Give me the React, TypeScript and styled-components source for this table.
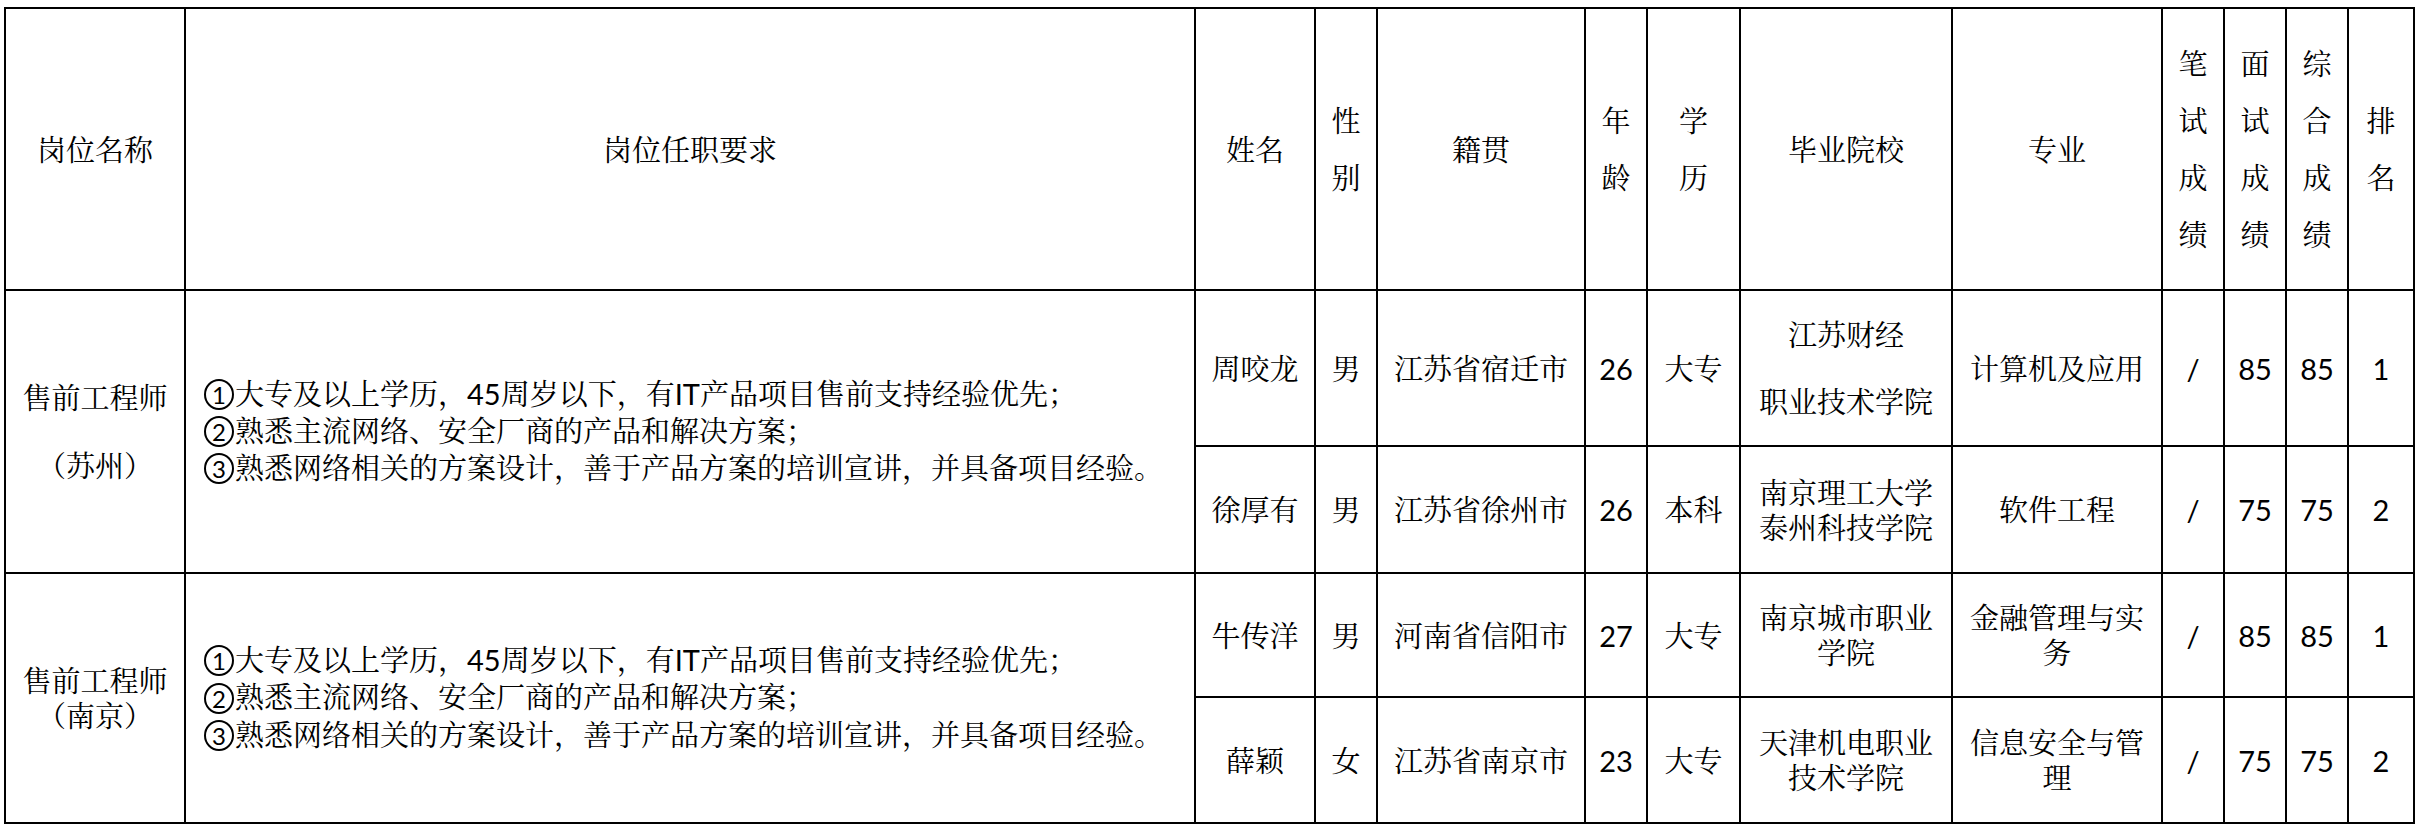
import React from "react";
import styled, { createGlobalStyle } from "styled-components";

const GlobalStyle = createGlobalStyle`
  body {
    margin: 0;
    background: #ffffff;
  }
`;

const Page = styled.div`
  padding: 7px 0 0 4px;
  font-family: "Lato", "Noto Serif CJK SC", "Noto Sans CJK SC", sans-serif;
  color: #000;
`;

const Sheet = styled.table`
  border-collapse: collapse;
  table-layout: fixed;
  width: 2409px;
  font-size: 29px;
`;

const Row = styled.tr<{ $h: number }>`
  height: ${(p) => p.$h}px;
`;

const Cell = styled.td<{ $left?: boolean; $pad?: number }>`
  border: 2px solid #000;
  padding: 0 ${(p) => p.$pad ?? 12}px;
  text-align: ${(p) => (p.$left ? "left" : "center")};
  vertical-align: middle;
  line-height: 35px;
  word-break: break-all;
`;

const Lines = styled.div<{ $lh: number }>`
  line-height: ${(p) => p.$lh}px;
`;

const Line = styled.div`
  white-space: nowrap;
`;

const Circled = styled.span`
  display: inline-block;
  position: relative;
  top: -3px;
  box-sizing: border-box;
  width: 30px;
  height: 31px;
  margin-right: 1px;
  border: 2px solid #000;
  border-radius: 50%;
  font-size: 24px;
  line-height: 27px;
  text-align: center;
  vertical-align: middle;
`;

const cols = [180, 1010, 120, 62, 208, 62, 93, 212, 210, 62, 62, 62, 66];

const Stack = ({ lines, lh }: { lines: string[]; lh: number }) => (
  <Lines $lh={lh}>
    {lines.map((l, i) => (
      <Line key={i}>{l}</Line>
    ))}
  </Lines>
);

const requirements = [
  "大专及以上学历，45周岁以下，有IT产品项目售前支持经验优先；",
  "熟悉主流网络、安全厂商的产品和解决方案；",
  "熟悉网络相关的方案设计，善于产品方案的培训宣讲，并具备项目经验。",
];

const Requirements = () => (
  <Lines $lh={35}>
    {requirements.map((r, i) => (
      <Line key={i}>
        <Circled>{i + 1}</Circled>
        {r}
      </Line>
    ))}
  </Lines>
);

type Person = {
  name: string;
  sex: string;
  origin: string;
  age: string;
  edu: string;
  school: string | string[];
  major: string;
  written: string;
  interview: string;
  total: string;
  rank: string;
  h: number;
};

const groups: { post: string[]; postLh: number; people: Person[] }[] = [
  {
    post: ["售前工程师", "（苏州）"],
    postLh: 68,
    people: [
      {
        name: "周咬龙",
        sex: "男",
        origin: "江苏省宿迁市",
        age: "26",
        edu: "大专",
        school: ["江苏财经", "职业技术学院"],
        major: "计算机及应用",
        written: "/",
        interview: "85",
        total: "85",
        rank: "1",
        h: 156,
      },
      {
        name: "徐厚有",
        sex: "男",
        origin: "江苏省徐州市",
        age: "26",
        edu: "本科",
        school: "南京理工大学泰州科技学院",
        major: "软件工程",
        written: "/",
        interview: "75",
        total: "75",
        rank: "2",
        h: 127,
      },
    ],
  },
  {
    post: ["售前工程师", "（南京）"],
    postLh: 35,
    people: [
      {
        name: "牛传洋",
        sex: "男",
        origin: "河南省信阳市",
        age: "27",
        edu: "大专",
        school: "南京城市职业学院",
        major: "金融管理与实务",
        written: "/",
        interview: "85",
        total: "85",
        rank: "1",
        h: 124,
      },
      {
        name: "薛颖",
        sex: "女",
        origin: "江苏省南京市",
        age: "23",
        edu: "大专",
        school: "天津机电职业技术学院",
        major: "信息安全与管理",
        written: "/",
        interview: "75",
        total: "75",
        rank: "2",
        h: 126,
      },
    ],
  },
];

const vertical = (s: string) => <Stack lines={s.split("")} lh={57} />;

const App = () => {
  return (
    <Page>
      <GlobalStyle />
      <Sheet>
        <colgroup>
          {cols.map((w, i) => (
            <col key={i} style={{ width: w }} />
          ))}
        </colgroup>
        <tbody>
          <Row $h={282}>
            <Cell>岗位名称</Cell>
            <Cell>岗位任职要求</Cell>
            <Cell>姓名</Cell>
            <Cell $pad={4}>{vertical("性别")}</Cell>
            <Cell>籍贯</Cell>
            <Cell $pad={4}>{vertical("年龄")}</Cell>
            <Cell>{vertical("学历")}</Cell>
            <Cell>毕业院校</Cell>
            <Cell>专业</Cell>
            <Cell $pad={4}>{vertical("笔试成绩")}</Cell>
            <Cell $pad={4}>{vertical("面试成绩")}</Cell>
            <Cell $pad={4}>{vertical("综合成绩")}</Cell>
            <Cell $pad={4}>{vertical("排名")}</Cell>
          </Row>
          {groups.map((g, gi) =>
            g.people.map((p, pi) => (
              <Row $h={p.h} key={`${gi}-${pi}`}>
                {pi === 0 && (
                  <>
                    <Cell rowSpan={g.people.length}>
                      <Stack lines={g.post} lh={g.postLh} />
                    </Cell>
                    <Cell rowSpan={g.people.length} $left $pad={18}>
                      <Requirements />
                    </Cell>
                  </>
                )}
                <Cell>{p.name}</Cell>
                <Cell $pad={4}>{p.sex}</Cell>
                <Cell>{p.origin}</Cell>
                <Cell $pad={4}>{p.age}</Cell>
                <Cell>{p.edu}</Cell>
                <Cell>
                  {Array.isArray(p.school) ? (
                    <Stack lines={p.school} lh={67} />
                  ) : (
                    p.school
                  )}
                </Cell>
                <Cell>{p.major}</Cell>
                <Cell $pad={4}>{p.written}</Cell>
                <Cell $pad={4}>{p.interview}</Cell>
                <Cell $pad={4}>{p.total}</Cell>
                <Cell $pad={4}>{p.rank}</Cell>
              </Row>
            ))
          )}
        </tbody>
      </Sheet>
    </Page>
  );
};

export default App;
